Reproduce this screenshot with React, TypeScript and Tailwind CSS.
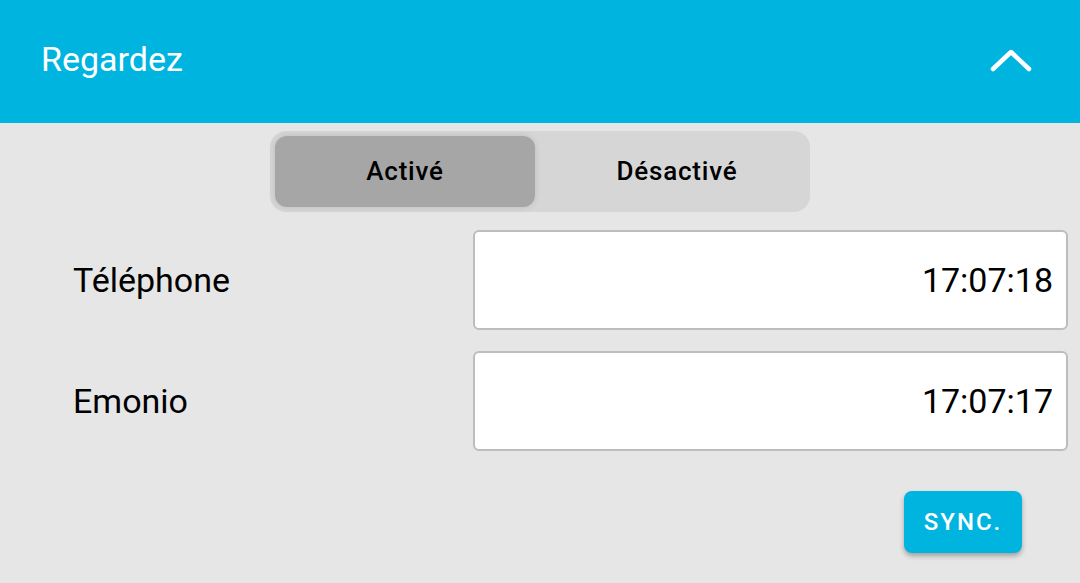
export default function App() {
  return (
    <div className="w-[1080px] h-[583px] bg-[#e6e6e6] font-['Roboto',sans-serif] overflow-hidden">
      {/* Header */}
      <div className="h-[123px] bg-[#00b4e0] flex items-center justify-between pl-[41px] pr-[48px] pb-[4px]">
        <span className="text-white text-[34px]">Regardez</span>
        <svg width="42" height="26" viewBox="0 0 42 26" fill="none">
          <path d="M3 22 L21 5 L39 22" stroke="white" strokeWidth="4.5" strokeLinecap="round" strokeLinejoin="round" />
        </svg>
      </div>

      {/* Toggle */}
      <div className="flex justify-center pt-[8px]">
        <div className="w-[540px] h-[81px] bg-[#d6d6d6] rounded-[16px] p-[5px] flex">
          <button className="w-[260px] h-full bg-[#a6a6a6] rounded-[12px] shadow-[0_0_6px_rgba(0,0,0,0.12)] text-[26px] font-medium tracking-[0.8px] text-black">
            Activé
          </button>
          <button className="flex-1 h-full pl-[14px] text-[26px] font-medium tracking-[0.8px] text-black">
            Désactivé
          </button>
        </div>
      </div>

      {/* Rows */}
      <div className="flex flex-col gap-[21px] pt-[18px] pl-[73px] pr-[12px]">
        <div className="flex items-center">
          <span className="w-[400px] text-[34px] text-black">Téléphone</span>
          <div className="flex-1 h-[100px] bg-white border-2 border-[#bdbdbd] rounded-[6px] flex items-center justify-end pr-[13px] text-[34px] text-black">
            17:07:18
          </div>
        </div>
        <div className="flex items-center">
          <span className="w-[400px] text-[34px] text-black">Emonio</span>
          <div className="flex-1 h-[100px] bg-white border-2 border-[#bdbdbd] rounded-[6px] flex items-center justify-end pr-[13px] text-[34px] text-black">
            17:07:17
          </div>
        </div>
      </div>

      {/* Sync */}
      <div className="flex justify-end pr-[58px] pt-[40px]">
        <button className="w-[118px] h-[62px] bg-[#00b4e0] rounded-[8px] shadow-[0_3px_5px_rgba(0,0,0,0.3)] text-white text-[24px] font-medium tracking-[2px]">
          SYNC.
        </button>
      </div>
    </div>
  );
}
